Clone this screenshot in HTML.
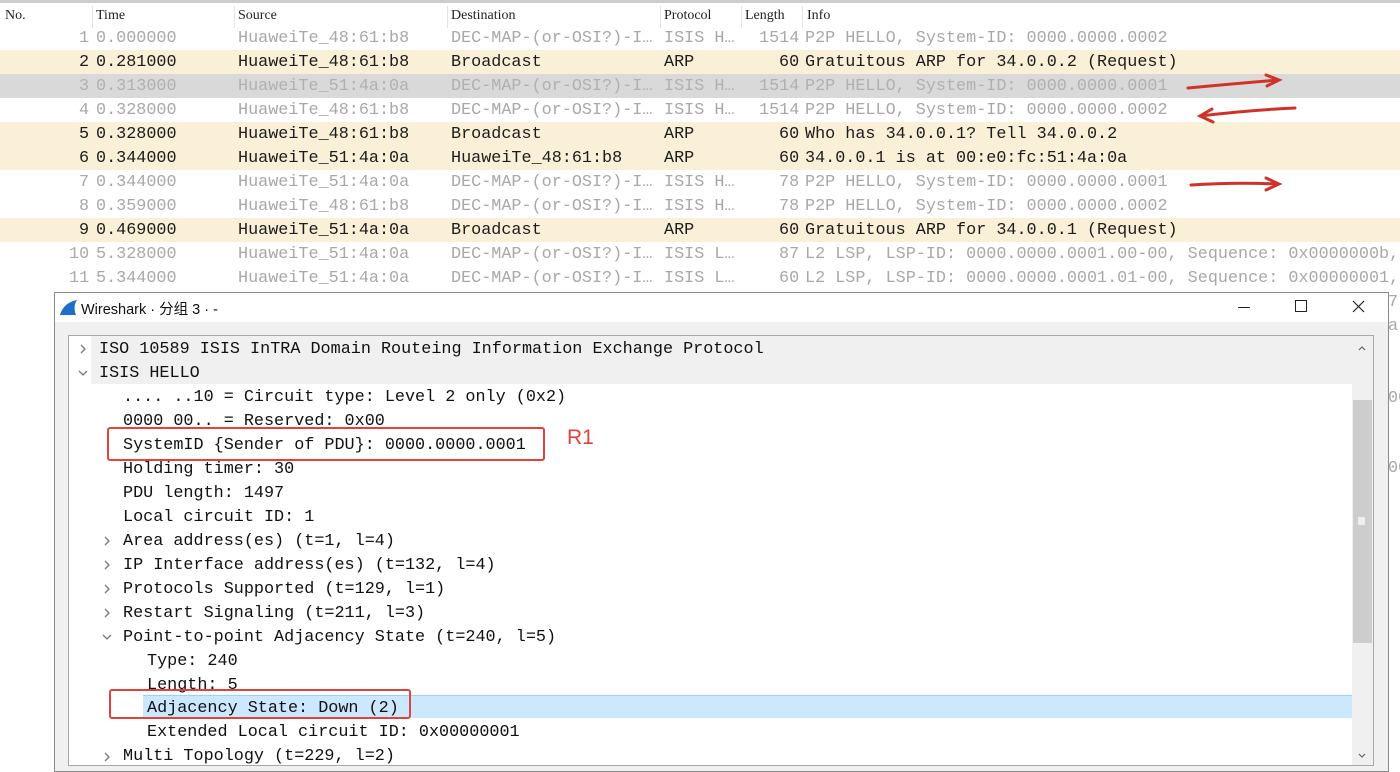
<!DOCTYPE html>
<html><head><meta charset="utf-8"><style>
*{margin:0;padding:0;box-sizing:border-box}
body{width:1400px;height:771px;overflow:hidden;background:#fff;position:relative;font-family:"Liberation Mono",monospace;font-size:16.8px}
.hdr{position:absolute;left:0;top:0;width:1400px;height:27px;border-top:3px solid #ccc;background:#fff;font-family:"Liberation Serif","Noto Serif CJK SC",serif;font-size:14px;color:#222}
.hdr span{position:absolute;top:5px}
.hdr i{position:absolute;top:3px;height:22px;border-left:1px solid #e4e4e4}
.row{position:absolute;left:0;width:1400px;height:24px;line-height:26px;white-space:pre;color:#a8a8a8}
.row span{position:absolute;top:0}
.arp{background:#faf0d7;color:#1c1c1c}
.sel3{background:#d9d9d9;color:#b0b0b0}
.dlg{position:absolute;left:54px;top:292px;width:1335px;height:480px;border:1px solid #8a8a8a;background:#f0f0f0}
.title{position:absolute;left:0;top:0;width:100%;height:29px;background:#fff;font-family:"Liberation Sans","Noto Sans CJK SC",sans-serif;font-size:14.5px;color:#111}
.tree{position:absolute;left:13px;top:42px;width:1306px;height:431px;border:1px solid #a8a8a8;background:#fff;overflow:hidden}
.t{position:absolute;left:0;height:24px;line-height:27px;white-space:pre;color:#111;width:1283px}
.ar{position:absolute;top:8px}
.sb{position:absolute;right:0;top:0;width:21px;height:100%;background:#f0f0f0}
</style></head><body>
<div class="hdr">
<span style="left:5px">No.</span><i style="left:92px"></i><span style="left:96px">Time</span><i style="left:234px"></i><span style="left:238px">Source</span><i style="left:447px"></i><span style="left:451px">Destination</span><i style="left:660px"></i><span style="left:664px">Protocol</span><i style="left:741px"></i><span style="left:745px">Length</span><i style="left:802px"></i><span style="left:807px">Info</span>
</div>
<div class="row" style="top:26px"><span style="left:79px">1</span><span style="left:96px">0.000000</span><span style="left:238px">HuaweiTe_48:61:b8</span><span style="left:451px">DEC-MAP-(or-OSI?)-I…</span><span style="left:664px">ISIS H…</span><span style="left:759px">1514</span><span style="left:805px">P2P HELLO, System-ID: 0000.0000.0002</span></div>
<div class="row arp" style="top:50px"><span style="left:79px">2</span><span style="left:96px">0.281000</span><span style="left:238px">HuaweiTe_48:61:b8</span><span style="left:451px">Broadcast</span><span style="left:664px">ARP</span><span style="left:779px">60</span><span style="left:805px">Gratuitous ARP for 34.0.0.2 (Request)</span></div>
<div class="row sel3" style="top:74px"><span style="left:79px">3</span><span style="left:96px">0.313000</span><span style="left:238px">HuaweiTe_51:4a:0a</span><span style="left:451px">DEC-MAP-(or-OSI?)-I…</span><span style="left:664px">ISIS H…</span><span style="left:759px">1514</span><span style="left:805px">P2P HELLO, System-ID: 0000.0000.0001</span></div>
<div class="row" style="top:98px"><span style="left:79px">4</span><span style="left:96px">0.328000</span><span style="left:238px">HuaweiTe_48:61:b8</span><span style="left:451px">DEC-MAP-(or-OSI?)-I…</span><span style="left:664px">ISIS H…</span><span style="left:759px">1514</span><span style="left:805px">P2P HELLO, System-ID: 0000.0000.0002</span></div>
<div class="row arp" style="top:122px"><span style="left:79px">5</span><span style="left:96px">0.328000</span><span style="left:238px">HuaweiTe_48:61:b8</span><span style="left:451px">Broadcast</span><span style="left:664px">ARP</span><span style="left:779px">60</span><span style="left:805px">Who has 34.0.0.1? Tell 34.0.0.2</span></div>
<div class="row arp" style="top:146px"><span style="left:79px">6</span><span style="left:96px">0.344000</span><span style="left:238px">HuaweiTe_51:4a:0a</span><span style="left:451px">HuaweiTe_48:61:b8</span><span style="left:664px">ARP</span><span style="left:779px">60</span><span style="left:805px">34.0.0.1 is at 00:e0:fc:51:4a:0a</span></div>
<div class="row" style="top:170px"><span style="left:79px">7</span><span style="left:96px">0.344000</span><span style="left:238px">HuaweiTe_51:4a:0a</span><span style="left:451px">DEC-MAP-(or-OSI?)-I…</span><span style="left:664px">ISIS H…</span><span style="left:779px">78</span><span style="left:805px">P2P HELLO, System-ID: 0000.0000.0001</span></div>
<div class="row" style="top:194px"><span style="left:79px">8</span><span style="left:96px">0.359000</span><span style="left:238px">HuaweiTe_48:61:b8</span><span style="left:451px">DEC-MAP-(or-OSI?)-I…</span><span style="left:664px">ISIS H…</span><span style="left:779px">78</span><span style="left:805px">P2P HELLO, System-ID: 0000.0000.0002</span></div>
<div class="row arp" style="top:218px"><span style="left:79px">9</span><span style="left:96px">0.469000</span><span style="left:238px">HuaweiTe_51:4a:0a</span><span style="left:451px">Broadcast</span><span style="left:664px">ARP</span><span style="left:779px">60</span><span style="left:805px">Gratuitous ARP for 34.0.0.1 (Request)</span></div>
<div class="row" style="top:242px"><span style="left:69px">10</span><span style="left:96px">5.328000</span><span style="left:238px">HuaweiTe_51:4a:0a</span><span style="left:451px">DEC-MAP-(or-OSI?)-I…</span><span style="left:664px">ISIS L…</span><span style="left:779px">87</span><span style="left:805px">L2 LSP, LSP-ID: 0000.0000.0001.00-00, Sequence: 0x0000000b,</span></div>
<div class="row" style="top:266px"><span style="left:69px">11</span><span style="left:96px">5.344000</span><span style="left:238px">HuaweiTe_51:4a:0a</span><span style="left:451px">DEC-MAP-(or-OSI?)-I…</span><span style="left:664px">ISIS L…</span><span style="left:779px">60</span><span style="left:805px">L2 LSP, LSP-ID: 0000.0000.0001.01-00, Sequence: 0x00000001,</span></div>
<div class="row" style="top:290px"><span style="left:1388px">7,</span></div>
<div class="row" style="top:314px"><span style="left:1388px">a,</span></div>
<div class="row" style="top:386px"><span style="left:1388px">00</span></div>
<div class="row" style="top:456px"><span style="left:1388px">00</span></div>

<svg style="position:absolute;left:0;top:0" width="1400" height="771">
<g fill="none" stroke="#d0322a" stroke-width="3" stroke-linecap="round">
<path d="M1188 88 Q1230 84 1278 80"/><path d="M1266 75 L1279 80 L1267 86"/>
<path d="M1295 108 Q1250 110 1200 116"/><path d="M1212 109 L1200 116 L1213 122"/>
<path d="M1191 185 Q1235 182 1278 184"/><path d="M1266 178 L1279 184 L1266 190"/>
</g></svg>

<div class="dlg">
<div class="title">
<svg style="position:absolute;left:4px;top:6px" width="20" height="17"><path d="M1 16 C3 9 8 3 18 1 C15 5 15 11 17 16 Z" fill="#1f6fc8"/></svg>
<span style="position:absolute;left:26px;top:5px">Wireshark · 分组 3 · -</span>
<span style="position:absolute;left:1183px;top:14px;width:12px;border-top:1px solid #222"></span>
<span style="position:absolute;left:1240px;top:7px;width:12px;height:12px;border:1px solid #222"></span>
<svg style="position:absolute;left:1297px;top:7px" width="13" height="13"><path d="M1 1L12 12M12 1L1 12" stroke="#222" stroke-width="1.2"/></svg>
</div>
<div class="tree">
<div style="position:absolute;left:22px;top:0;width:1261px;height:48px;background:#f0f0f0"></div>
<svg style="position:absolute;left:0;top:0" width="60" height="431" fill="none" stroke="#777" stroke-width="1.3">
<path d="M12 9L16 13L12 17"/>
<path d="M10 35L14 39L18 35"/>
<path d="M36 201L40 205L36 209"/>
<path d="M36 225L40 229L36 233"/>
<path d="M36 249L40 253L36 257"/>
<path d="M36 273L40 277L36 281"/>
<path d="M34 299L38 303L42 299"/>
<path d="M36 417L40 421L36 425"/>
</svg>
<div class="t" style="top:0"><span style="position:absolute;left:30px">ISO 10589 ISIS InTRA Domain Routeing Information Exchange Protocol</span></div>
<div class="t" style="top:24px"><span style="position:absolute;left:30px">ISIS HELLO</span></div>
<div class="t" style="top:48px"><span style="position:absolute;left:54px">.... ..10 = Circuit type: Level 2 only (0x2)</span></div>
<div class="t" style="top:72px"><span style="position:absolute;left:54px">0000 00.. = Reserved: 0x00</span></div>
<div class="t" style="top:96px"><span style="position:absolute;left:54px">SystemID {Sender of PDU}: 0000.0000.0001</span></div>
<div class="t" style="top:120px"><span style="position:absolute;left:54px">Holding timer: 30</span></div>
<div class="t" style="top:144px"><span style="position:absolute;left:54px">PDU length: 1497</span></div>
<div class="t" style="top:168px"><span style="position:absolute;left:54px">Local circuit ID: 1</span></div>
<div class="t" style="top:192px"><span style="position:absolute;left:54px">Area address(es) (t=1, l=4)</span></div>
<div class="t" style="top:216px"><span style="position:absolute;left:54px">IP Interface address(es) (t=132, l=4)</span></div>
<div class="t" style="top:240px"><span style="position:absolute;left:54px">Protocols Supported (t=129, l=1)</span></div>
<div class="t" style="top:264px"><span style="position:absolute;left:54px">Restart Signaling (t=211, l=3)</span></div>
<div class="t" style="top:288px"><span style="position:absolute;left:54px">Point-to-point Adjacency State (t=240, l=5)</span></div>
<div class="t" style="top:312px"><span style="position:absolute;left:78px">Type: 240</span></div>
<div class="t" style="top:336px"><span style="position:absolute;left:78px">Length: 5</span></div>
<div style="position:absolute;left:74px;top:359px;width:1209px;height:23px;background:#cce8ff;border-top:1px solid #99d1ff"></div>
<div class="t" style="top:359px"><span style="position:absolute;left:78px">Adjacency State: Down (2)</span></div>
<div class="t" style="top:383px"><span style="position:absolute;left:78px">Extended Local circuit ID: 0x00000001</span></div>
<div class="t" style="top:407px"><span style="position:absolute;left:54px">Multi Topology (t=229, l=2)</span></div>
<div class="sb">
<svg style="position:absolute;left:0;top:0" width="21" height="431" fill="none" stroke="#666" stroke-width="1.2"><path d="M7 14L10 11L13 14"/><path d="M7 418L10 421L13 418"/></svg>
<div style="position:absolute;left:1px;top:64px;width:19px;height:243px;background:#cdcdcd"></div><div style="position:absolute;left:6px;top:181px;width:7px;height:8px;background:#eee"></div></div>
</div>
</div>

<div style="position:absolute;left:107px;top:427px;width:438px;height:34px;border:2.5px solid #e0433a;border-radius:3px"></div>
<div style="position:absolute;left:567px;top:426px;color:#e0433a;font-family:'Liberation Sans',sans-serif;font-size:21px">R1</div>
<div style="position:absolute;left:109px;top:689px;width:302px;height:30px;border:2.5px solid #e0433a;border-radius:3px"></div>
</body></html>
